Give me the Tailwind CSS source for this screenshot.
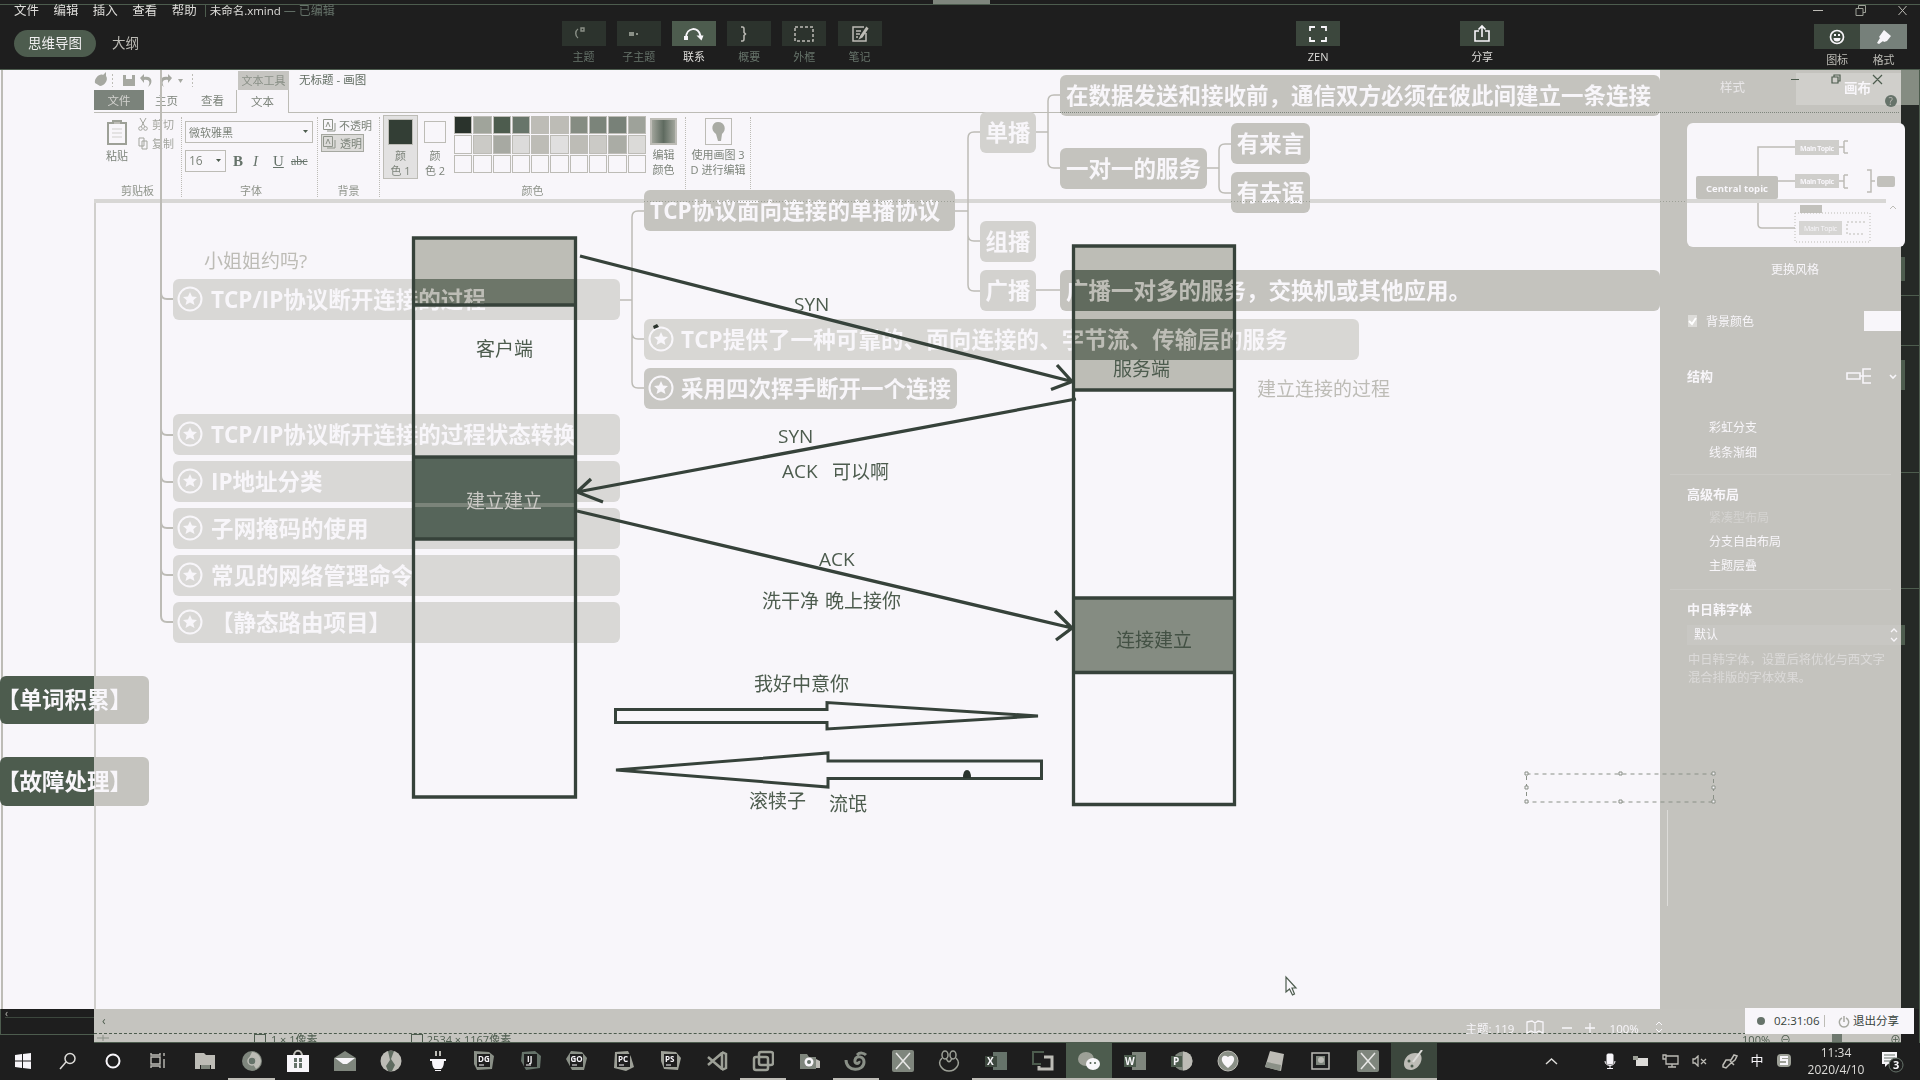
<!DOCTYPE html>
<html lang="zh">
<head>
<meta charset="utf-8">
<title>未命名.xmind</title>
<script src="https://cdn.jsdelivr.net/npm/@tailwindcss/browser@4"></script>
</head>
<body class="bg-[#1e1e1e]">
<div class="relative w-[1920px] h-[1080px] overflow-hidden flex flex-col bg-[#f8f6fa] font-['Open_Sans','Noto_Sans_CJK_SC',sans-serif] text-[12px] leading-none text-[#4d5c4e]">

  <!-- Mind map application header -->
  <header class="h-[70px] shrink-0 bg-[#1e1e1e] border-b border-[#4d5c4e] flex flex-col text-[#bdbcb6]">
    <div class="h-[5px] border-b border-[#4d5c4e] flex justify-center pl-[2px]"><span class="w-[57px] h-1 bg-[#7f867d]"></span></div>
    <div class="h-4 flex items-start pl-[14px] whitespace-nowrap">
      <nav class="flex gap-[14.4px] text-[12.5px] text-[#dddcd9]"><span>文件</span><span>编辑</span><span>插入</span><span>查看</span><span>帮助</span></nav>
      <span class="w-px h-3 bg-[#4d5c4e] ml-2 mr-1"></span>
      <span class="w-[74px] text-[11.500px] text-[#dddcd9]">未命名.xmind</span>
      <span class="text-[12px] text-[#66736a]">— 已编辑</span>
      <span class="ml-auto flex items-center pr-[12px] gap-[31px]">
        <svg width="11" height="11" stroke="#bdbcb6"><path d="M0 5.500h10"/></svg>
        <svg width="11" height="11" fill="none" stroke="#9da097"><path d="M1 3.500h7v7h-7zM3.500 3V.5h7v7H8"/></svg>
        <svg width="11" height="11" stroke="#bdbcb6"><path d="M1.500 1l8 9M9.500 1l-8 9"/></svg>
      </span>
    </div>
    <div class="flex items-start h-[48px] text-[11px] whitespace-nowrap">
      <span class="ml-[14px] mt-[9px] w-[82px] h-[27px] rounded-full bg-[#4d5c4e] text-[#f0eff0] text-[13.5px] flex items-center justify-center">思维导图</span>
      <span class="ml-4 mt-[16px] w-[444px] text-[13.5px]">大纲</span>
      <div class="flex text-[#66736a]">
        <div class="w-[55.2px] flex flex-col items-center gap-[5px]"><span class="w-11 h-[25px] bg-[#2c332d] flex items-center justify-center"><svg width="22" height="20" fill="none" stroke="#8a9087" stroke-width="1.400"><path d="M5 5C2 7 2 12 5 14M8 4h3v3H8z"/></svg></span>主题</div>
        <div class="w-[55.2px] flex flex-col items-center gap-[5px]"><span class="w-11 h-[25px] bg-[#2c332d] flex items-center justify-center"><svg width="22" height="20" fill="#8a9087"><path d="M1 8h5v4H1zM8 9h2v2H8z"/></svg></span>子主题</div>
        <div class="w-[55.2px] flex flex-col items-center gap-[5px] text-[#dddcd9]"><span class="w-11 h-[25px] bg-[#4d5c4e] flex items-center justify-center"><svg width="24" height="20" fill="none" stroke="#f8f6fa" stroke-width="2"><path d="M4 14C4 3 17 2 18.500 12"/><path d="M14.500 11.500h7l-2 5zM2 12h4v4H2z" fill="#f8f6fa" stroke="none"/></svg></span>联系</div>
        <div class="w-[55.2px] flex flex-col items-center gap-[5px]"><span class="w-11 h-[25px] bg-[#2c332d] flex items-center justify-center"><svg width="22" height="20" fill="none" stroke="#bdbcb6" stroke-width="1.500"><path d="M3 3h1.500q1.500 0 1.500 2v3.500l1.500 1.500-1.500 1.500V15q0 2-1.500 2H3"/></svg></span>概要</div>
        <div class="w-[55.2px] flex flex-col items-center gap-[5px]"><span class="w-11 h-[25px] bg-[#2c332d] flex items-center justify-center"><svg width="22" height="20" fill="none" stroke="#bdbcb6" stroke-width="1.500" stroke-dasharray="3 2"><path d="M2 3h18v14H2z"/></svg></span>外框</div>
        <div class="w-[55.2px] flex flex-col items-center gap-[5px]"><span class="w-11 h-[25px] bg-[#2c332d] flex items-center justify-center"><svg width="22" height="20" fill="none" stroke="#bdbcb6" stroke-width="1.500"><path d="M15 3H4v14h13V9M7 7h5M7 10h4M7 13h2M18 3l-6 9-1 2 2-1 6-9"/></svg></span>笔记</div>
      </div>
      <div class="ml-[409px] w-11 flex flex-col items-center gap-[5px] text-[#dddcd9]"><span class="w-11 h-[25px] bg-[#3c473d] flex items-center justify-center"><svg width="20" height="18" fill="none" stroke="#f8f6fa" stroke-width="1.800"><path d="M2 6V2h5M13 2h5v4M18 12v4h-5M7 16H2v-4"/></svg></span>ZEN</div>
      <div class="ml-[120px] w-11 flex flex-col items-center gap-[5px] text-[#dddcd9]"><span class="w-11 h-[25px] bg-[#3c473d] flex items-center justify-center"><svg width="18" height="20" fill="none" stroke="#f8f6fa" stroke-width="1.600"><path d="M6 7H2v10h14V7h-4M9 13V2.500M5.500 5.500L9 2l3.500 3.500"/></svg></span>分享</div>
      <div class="ml-[310px] mt-[3px] w-[46px] flex flex-col items-center gap-[5px]"><span class="w-full h-[25px] bg-[#3c473d] flex items-center justify-center"><svg width="18" height="18"><circle cx="9" cy="9" r="6.500" fill="none" stroke="#f8f6fa" stroke-width="1.700"/><path d="M5.500 10h7a3.500 3.500 0 0 1-7 0zM6 6h2v2H6zM10 6h2v2h-2z" fill="#f8f6fa"/></svg></span>图标</div>
      <div class="mt-[3px] w-[47px] flex flex-col items-center gap-[5px]"><span class="w-full h-[25px] bg-[#76807a] flex items-center justify-center"><svg width="18" height="18" fill="#f8f6fa"><path d="M9 2l7 6-4 5-3 1-5-5zM5 10l3 3-4 3-2-1z"/></svg></span>格式</div>
    </div>
  </header>

  <div class="flex h-[939px] shrink-0">
    <!-- Mind map edge visible to the left of the drawing window -->
    <div class="w-[94px] pl-px shrink-0"><div class="h-full border-l-2 border-[#bdbcb6]"></div></div>

    <!-- Drawing window -->
    <section class="w-[1566px] shrink-0 flex flex-col text-[#7d847b]">
      <div class="h-5 flex items-center whitespace-nowrap">
        <svg width="144" height="18" fill="#a6a8a1"><path d="M1 12C0 7 6 2 9 4l3-3v4c3 4-2 10-6 10z"/><path d="M29 4h12v11H29zm3 0v4h6V4z" fill-rule="evenodd"/><path d="M50 3v3c8-2 10 6 4 10 3-5 1-8-4-7v3l-4-5zM74 3v3c-8-2-10 6-4 10-3-5-1-8 4-7v3l4-5z"/><path d="M84 8h5l-2.500 4z"/><path d="M18.500 3v13M98.500 3v13" stroke="#bdbcb6" stroke-dasharray="2 2"/></svg>
        <span class="w-[51px] h-[19px] bg-[#c6c5c1] flex items-center justify-center text-[11px] text-[#8a9087]">文本工具</span>
        <span class="ml-[10px] text-[11.500px] text-[#5f6b60]">无标题 - 画图</span>
      </div>
      <div class="h-[23px] border-b border-[#bdbcb6] flex text-[11.500px]">
        <span class="w-[50px] h-5 bg-[#7b837b] text-[#d3d2cf] flex items-center justify-center pt-px">文件</span>
        <span class="w-[45px] h-[22px] flex items-center justify-center">主页</span>
        <span class="w-[47px] h-[22px] flex items-center justify-center">查看</span>
        <span class="w-[53px] h-[23px] border-x border-[#bdbcb6] bg-[#f8f6fa] flex items-center justify-center">文本</span>
      </div>
      <div class="h-[86px] pt-1 pb-[2px] flex text-[11px]">
        <div class="w-[88px] border-r border-dotted border-[#bdbcb6] flex flex-col">
          <div class="flex h-[68px] pl-3">
            <div class="w-[22px] flex flex-col items-center gap-1 pt-px whitespace-nowrap"><svg width="22" height="28" fill="#f8f6fa" stroke="#9da097" stroke-width="2"><path d="M2 5h18v21H2z"/><path d="M7 6V3h8v3" fill="#bdbcb6"/><path d="M6 11h10M6 15h10M6 19h10" stroke="#d0cfcc" stroke-width="1"/></svg>粘贴</div>
            <div class="ml-[10px] flex flex-col gap-[6px] pt-px text-[#a3a59e]">
              <span class="flex items-center gap-1 whitespace-nowrap"><svg width="10" height="13" fill="none" stroke="#a3a59e"><path d="M2 0l5 9M8 0L3 9"/><circle cx="2.500" cy="10.500" r="1.800"/><circle cx="7.500" cy="10.500" r="1.800"/></svg>剪切</span>
              <span class="flex items-center gap-1 whitespace-nowrap"><svg width="10" height="13" fill="none" stroke="#a3a59e"><path d="M1 1h5v8H1zM4 4h5v8H4z"/></svg>复制</span>
            </div>
          </div>
          <span class="text-center text-[#8f948b]">剪贴板</span>
        </div>
        <div class="w-[136px] border-r border-dotted border-[#bdbcb6] flex flex-col pl-[3px]">
          <div class="h-[68px] pt-1">
            <div class="w-[128px] h-[22px] border border-[#bdbcb6] flex items-center justify-between px-[3px]">微软雅黑<svg width="6" height="4" fill="#4d5c4e"><path d="M0 0h5L2.500 3z"/></svg></div>
            <div class="flex mt-[7px] items-center">
              <div class="w-[41px] h-[22px] border border-[#bdbcb6] flex items-center justify-between px-[3px] text-[12px]">16<svg width="6" height="4" fill="#4d5c4e"><path d="M0 0h5L2.500 3z"/></svg></div>
              <span class="flex items-center ml-[7px] font-['Liberation_Serif'] text-[15px] text-[#66736a]"><b class="w-[20px]">B</b><i class="w-[20px]">I</i><u class="w-[18px]">U</u><s class="text-[12px]">abc</s></span>
            </div>
          </div>
          <span class="text-center text-[#8f948b]">字体</span>
        </div>
        <div class="w-[62px] border-r border-dotted border-[#bdbcb6] flex flex-col">
          <div class="h-[68px] pl-[3px] flex flex-col whitespace-nowrap">
            <div class="h-[17px] pl-[2px] flex items-center gap-[2px]"><svg width="14" height="14" fill="none" stroke="#8f948b"><path d="M.5.5h9v10h-9zM3 8l2-5 2 5M12 4v8H4"/></svg>不透明</div>
            <div class="w-[43px] h-[18px] border border-[#a6a8a1] bg-[#dcdbd9] pl-px flex items-center gap-[2px]"><svg width="15" height="14" fill="none" stroke="#8f948b"><path d="M.5.5h9v10h-9zM3 8l2-5 2 5M12 4v8H4"/></svg>透明</div>
          </div>
          <span class="text-center text-[#8f948b]">背景</span>
        </div>
        <div class="w-[306px] border-r border-dotted border-[#bdbcb6] flex flex-col">
          <div class="h-[68px] pl-[3px] flex">
            <div class="w-[35px] h-[64px] -mt-[2px] border border-[#bdbcb6] bg-[#e2e1e1] flex flex-col items-center pt-[3px] leading-[15px]"><span class="w-[25px] h-[26px] mb-[3px] bg-[#333e35] border border-[#bdbcb6]"></span><span>颜</span><span>色 1</span></div>
            <div class="w-[28px] ml-[3px] flex flex-col items-center pt-1 leading-[15px]"><span class="w-[22px] h-[22px] mb-[5px] border border-[#bdbcb6]"></span><span>颜</span><span>色 2</span></div>
            <div class="w-[192px] h-[57px] ml-[5px] -mt-px grid grid-cols-10 gap-px [&>i]:border [&>i]:border-[#bdbcb6]">
              <i class="bg-[#2a332c]"></i><i class="bg-[#a0a49b]"></i><i class="bg-[#4d5c4e]"></i><i class="bg-[#68756a]"></i><i class="bg-[#bdbcb6]"></i><i class="bg-[#bdbcb6]"></i><i class="bg-[#858c82]"></i><i class="bg-[#7b847a]"></i><i class="bg-[#788178]"></i><i class="bg-[#9ea29a]"></i>
              <i></i><i class="bg-[#cbcac6]"></i><i class="bg-[#a7a9a2]"></i><i class="bg-[#dcdbda]"></i><i class="bg-[#bdbcb6]"></i><i class="bg-[#e0dfdf]"></i><i class="bg-[#bdbcb6]"></i><i class="bg-[#cbcac6]"></i><i class="bg-[#aaaca5]"></i><i class="bg-[#dbdad8]"></i>
              <i></i><i></i><i></i><i></i><i></i><i></i><i></i><i></i><i></i><i></i>
            </div>
            <div class="w-[27px] ml-1 flex flex-col items-center pt-[1px] leading-[15px] whitespace-nowrap"><span class="w-[27px] h-[27px] mb-[2px] border-2 border-[#bdbcb6] bg-linear-to-r from-[#a0a49b] via-[#5f6b60] to-[#a0a49b]"></span><span>编辑</span><span>颜色</span></div>
          </div>
          <span class="text-center text-[#8f948b]">颜色</span>
        </div>
        <div class="w-[65px] border-r border-dotted border-[#bdbcb6] flex flex-col items-center leading-[15px] whitespace-nowrap pt-[1px]"><span class="w-[27px] h-[27px] mb-[2px] border border-[#bdbcb6] flex items-center justify-center"><svg width="18" height="22" fill="#a9aba4"><path d="M9 1c7 0 9 8 4 12l-1 7H9l-2-7C1 9 3 1 9 1z"/></svg></span><span>使用画图 3</span><span>D 进行编辑</span></div>
      </div>
      <div class="h-1 bg-[#d8d7d5]"></div>
      <div class="flex-1 border-l-2 border-[#d0cfcc]"></div>
    </section>

    <!-- Format panel -->
    <aside class="w-[241px] shrink-0 bg-[#c4c3be] text-[#f8f6fa] flex flex-col whitespace-nowrap">
      <div class="h-[35px] flex text-[12.5px]"><span class="w-[136px] flex items-center pl-[60px] pt-[2px] opacity-70">样式</span><span class="flex-1 mt-[3px] bg-[#d0cfcb] flex items-center pl-12 text-[13.500px] font-bold">画布</span></div>
      <div class="w-[218px] h-[124px] ml-[27px] mt-[18px] rounded-md bg-[#f8f6fa] z-10">
        <svg width="218" height="124" fill="none" stroke="#bdbcb6" stroke-width="1.500"><path d="M71 53V24h37M91 58h17M71 76v25q0 4 4 4h33M152 24h5M157 18v12M157 18h4M157 30h4M152 58h5M157 52v13M157 52h4M157 65h4"/><path d="M180 47h4v22h-4M184 58h4"/><g fill="#c2c1bc" stroke="none"><rect x="9" y="53" width="82" height="23" rx="2"/><rect x="108" y="17" width="44" height="15" fill="#cfcecb"/><rect x="108" y="51" width="44" height="14" fill="#cfcecb"/><rect x="190" y="53" width="18" height="11" rx="2"/><rect x="113" y="82" width="22" height="8"/><rect x="112" y="98" width="43" height="14" fill="#d6d5d3"/></g><path d="M108 90h75v29h-75z" stroke-width="1" stroke-dasharray="1 2"/><path d="M178 99h-18v12h18" stroke-width="1" stroke-dasharray="2 2"/><path d="M0 78h199" stroke="#d8d7d5" stroke-width="4"/><path d="M203 86l3-3 3 3" stroke-width="1"/><g fill="#f8f6fa" stroke="none"><text x="19" y="68.500" font-size="9.500" font-weight="700" textLength="62">Central topic</text><text x="113" y="27.500" font-size="7" font-weight="700" textLength="34">Main Topic</text><text x="113" y="61" font-size="7" font-weight="700" textLength="34">Main Topic</text><text x="117" y="108" font-size="7" textLength="33">Main Topic</text></g></svg>
      </div>
      <span class="mt-[17px] text-center pl-[29px]">更换风格</span>
      <div class="mt-[35px] flex items-center pl-7 h-5 z-10"><span class="w-3 h-3 bg-[#dddcd9] flex items-center justify-center"><svg width="9" height="9" fill="none" stroke="#fff" stroke-width="2"><path d="M1 4l3 3 4-6"/></svg></span><span class="ml-[9px] w-[48px] pt-px shrink-0">背景颜色</span><span class="ml-[110px] w-[37px] h-5 shrink-0 bg-[#f8f6fa]"></span></div>
      <div class="mt-[35px] h-5 flex items-center pl-[27px] text-[13px] font-bold">结构<svg class="ml-auto mr-[3px]" width="52" height="18" fill="none" stroke="#f8f6fa" stroke-width="1.600"><path d="M1 6h13v6H1zM14 9h11M25 2h-8v14h8M44 8l3 3 3-3"/></svg></div>
      <div class="mt-[36px] pl-[49px] flex flex-col gap-[13px]"><span>彩虹分支</span><span>线条渐细</span></div>
      <div class="mt-[15px] mx-[10px] h-px bg-[#cbcac6]"></div>
      <span class="mt-[13px] pl-[27px] text-[13px] font-bold">高级布局</span>
      <div class="mt-[11px] pl-[49px] flex flex-col gap-3"><span class="opacity-30">紧凑型布局</span><span>分支自由布局</span><span>主题层叠</span></div>
      <div class="mt-[17px] mx-[10px] h-px bg-[#cbcac6]"></div>
      <span class="mt-[13px] pl-[27px] text-[13px] font-bold">中日韩字体</span>
      <div class="mt-[9px] ml-[27px] h-5 bg-[#c8c7c3] flex items-center pl-[7px]">默认<svg class="ml-auto mr-[3px]" width="8" height="14" fill="none" stroke="#f8f6fa" stroke-width="1.300"><path d="M1 4l3-3 3 3M1 10l3 3 3-3"/></svg></div>
      <p class="mt-[6px] pl-[28px] leading-[18px] text-[12.300px] opacity-45">中日韩字体，设置后将优化与西文字<br>混合排版的字体效果。</p>
    </aside>

    <!-- Edge of the window behind -->
    <div class="flex-1 bg-[#252926] border-r border-[#4d5c4e] flex flex-col">
      <span class="h-[35px] bg-[#858c82]"></span><span class="mt-[152px] h-6 w-1 bg-[#4d5c4e]"></span><span class="mt-[14px] h-px bg-[#4d5c4e]"></span><span class="mt-[49px] h-px bg-[#4d5c4e]"></span><span class="mt-[14px] h-[30px] w-1 bg-[#4d5c4e]"></span><span class="mt-[82px] h-px bg-[#4d5c4e]"></span><span class="mt-[115px] h-px bg-[#4d5c4e]"></span><span class="mt-9 h-5 w-1 bg-[#4d5c4e]"></span>
    </div>
  </div>

  <!-- Status strips -->
  <div class="h-[34px] shrink-0 flex">
    <div class="w-[94px] bg-[#1e1e1e]"><div class="h-[26px] border-l border-b border-[#4d5c4e] text-[#bdbcb6] text-[10px] pl-1"><div class="h-[9px] border-b border-[#3c473d] leading-[8px]">‹</div></div></div>
    <div class="w-[1807px] bg-[#c5c4bf] border-b border-[#4d5c4e]">
      <div class="h-[25px] border-b border-dashed border-[#4d5c4e] flex items-end text-[#f8f6fa] whitespace-nowrap"><span class="pl-2 self-center text-[#4d5c4e]">‹</span><span class="ml-[1360px] w-[60px] text-[11.500px] leading-[8px]">主题: 119</span><svg width="130" height="16" class="-mr-[46px] -mb-[2px]" fill="none" stroke="#f8f6fa" stroke-width="1.300"><path d="M1 3l5-1 3 2 3-2 5 1v11l-4-2-4 2-4-2-4 2zM9 4v9M36 9h10M59 9h10M64 4v10"/></svg><span class="w-[45px] leading-[8px] text-[11.500px]">100%</span><svg width="9" height="14" class="-mb-px" fill="none" stroke="#f8f6fa"><path d="M1 5l3-3 3 3M1 9l3 3 3-3"/></svg></div>
      <div class="h-2 overflow-hidden flex items-start text-[11px] leading-[11px] whitespace-nowrap"><svg width="160" height="8"><path d="M3 4h12M9 1v6" stroke="#8a9087"/></svg><span class="w-3 h-3 border border-[#4d5c4e] mr-[5px]"></span><span class="w-[140px]">1 × 1像素</span><span class="w-3 h-3 border border-[#4d5c4e] mr-[4px]"></span><span class="w-[1316px]">2534 × 1167像素</span><span class="w-[38px]">100%</span><span class="w-4">⊖</span><span class="w-[10px] h-2 ml-9 bg-[#6f7970]"></span><span class="ml-12">⊕</span></div>
    </div>
    <div class="flex-1 bg-[#1e1e1e] border-r border-[#4d5c4e]"></div>
  </div>

  <!-- Taskbar -->
  <footer class="h-[37px] shrink-0 bg-[#1e1e1e] flex text-[#f8f6fa] [&>span]:h-full [&>span]:shrink-0 [&>span]:flex [&>span]:items-center [&>span]:justify-center [&>span]:border-b-2 [&>span]:border-transparent">
    <span class="w-[45px]"><svg width="16" height="16" fill="#f8f6fa"><path d="M0 2l7-1v6.500H0zM8 1l8-1v7.500H8zM0 8.500h7V15l-7-1zM8 8.500h8V16l-8-1z"/></svg></span>
    <span class="w-[45px]"><svg width="18" height="18" fill="none" stroke="#dddcd9" stroke-width="1.500"><circle cx="11" cy="6.500" r="5"/><path d="M7 10l-6 7"/></svg></span>
    <span class="w-[45px]"><svg width="18" height="18" fill="none" stroke="#f8f6fa" stroke-width="2"><circle cx="9" cy="9" r="6.500"/></svg></span>
    <span class="w-[46px]"><svg width="18" height="18" fill="none" stroke="#bdbcb6" stroke-width="1.400"><path d="M2 5h9v7H2zM2 1v2h9V1M2 16v-2h9v2M15 1v3M15 7v9"/></svg></span>
    <span class="w-[47px]"><svg width="20" height="18" fill="#bdbcb6"><path d="M0 1h9l2 2h9v14h-4v-4H5v4H0z"/><path d="M6 13h9v4H6z" fill="#7f867d"/></svg></span>
    <span class="w-[47px] border-[#bdbcb6]!"><svg width="20" height="20"><circle cx="10" cy="10" r="10" fill="#7f867d"/><path d="M10 1a9 9 0 0 1 4 17l-3-5 3-6H7z" fill="#bdbcb6"/><circle cx="10" cy="10" r="4" fill="#66736a" stroke="#bdbcb6" stroke-width="1.500"/></svg></span>
    <span class="w-[46px]"><svg width="22" height="23"><path d="M7 7c0-7 8-7 8 0" fill="none" stroke="#bdbcb6" stroke-width="2"/><path d="M0 6h22v17H0z" fill="#f8f6fa"/><path d="M7 9h3v4H7zM12 9h3v4h-3zM7 14h3v5H7zM12 14h3v5h-3z" fill="#66736a"/></svg></span>
    <span class="w-[47px]"><svg width="22" height="20"><path d="M0 7l11-7 11 7v13H0z" fill="#7f867d"/><path d="M1 7h20l-8 6h-4z" fill="#f8f6fa"/></svg></span>
    <span class="w-[46px]"><svg width="22" height="22"><circle cx="11" cy="11" r="10.500" fill="#bdbcb6"/><path d="M8 1h6l-3 8 4 6-3 6H8l-2-5 4-6z" fill="#5f6b60"/></svg></span>
    <span class="w-[47px]"><svg width="18" height="20"><path d="M3 10h12c0 7-3 8-3 8H6s-3-1-3-8zM1 8h16v2H1zM6 19h6v1H6z" fill="#f8f6fa"/><path d="M7 0v5M11 0v5" stroke="#bdbcb6" stroke-width="2"/></svg></span>
    <span class="w-[46px]"><svg width="22" height="21"><path d="M1 1l15 1 5 4-2 13-15 1-3-6z" fill="#8a9087"/><path d="M4 4h13v13H4z" fill="#1e1e1e"/><text x="5" y="11.500" font-size="8" font-weight="700" fill="#f8f6fa">DG</text><path d="M6 15h5" stroke="#f8f6fa"/></svg></span>
    <span class="w-[47px]"><svg width="22" height="21"><path d="M2 2l13-1 6 5-1 12-14 2-5-9z" fill="#66736a"/><path d="M4 4h13v13H4z" fill="#1e1e1e"/><text x="7" y="11.500" font-size="8" font-weight="700" fill="#f8f6fa">IJ</text><path d="M6 15h5" stroke="#f8f6fa"/></svg></span>
    <span class="w-[46px]"><svg width="22" height="21"><path d="M5 1l11 1 5 6-3 12H6L0 9z" fill="#8a9087"/><path d="M4 4h13v13H4z" fill="#1e1e1e"/><text x="4.500" y="11.500" font-size="8" font-weight="700" fill="#f8f6fa">GO</text><path d="M6 15h5" stroke="#f8f6fa"/></svg></span>
    <span class="w-[47px]"><svg width="22" height="21"><path d="M2 2l13-1 3 6 3 10-8 4-12-3z" fill="#9da097"/><path d="M4 4h13v13H4z" fill="#1e1e1e"/><text x="5" y="11.500" font-size="8" font-weight="700" fill="#f8f6fa">PC</text><path d="M6 15h5" stroke="#f8f6fa"/></svg></span>
    <span class="w-[47px]"><svg width="22" height="21"><path d="M1 1l15 1 5 6-3 12-14-1-3-8z" fill="#9da097"/><path d="M4 4h13v13H4z" fill="#1e1e1e"/><text x="5" y="11.500" font-size="8" font-weight="700" fill="#f8f6fa">PS</text><path d="M6 15h5" stroke="#f8f6fa"/></svg></span>
    <span class="w-[46px]"><svg width="22" height="22" fill="none" stroke="#9da097" stroke-width="2.500"><path d="M16 2v18M16 3L2 15M16 19L2 7M16 2l4 2v14l-4 2"/></svg></span>
    <span class="w-[46px] border-[#bdbcb6]!"><svg width="22" height="22" fill="none" stroke="#9da097" stroke-width="2.500"><rect x="7" y="2" width="14" height="13" rx="2"/><rect x="2" y="7" width="14" height="13" rx="2"/></svg></span>
    <span class="w-[47px]"><svg width="22" height="18"><path d="M1 2h7l2 3h7v12H1z" fill="#7f867d"/><path d="M17 7l4 2v7h-4z" fill="#bdbcb6"/><circle cx="10" cy="10" r="4.500" fill="#f8f6fa"/><circle cx="10" cy="10" r="2" fill="#66736a"/></svg></span>
    <span class="w-[46px] border-[#bdbcb6]!"><svg width="24" height="20" fill="none" stroke="#8a9087" stroke-width="3"><path d="M2 9c0 12 18 12 18 2 0-6-8-7-9-2s5 4 4 1M13 4c3-3 7-2 9 0"/></svg></span>
    <span class="w-[47px]"><svg width="22" height="22"><rect width="22" height="22" rx="2" fill="#7f867d"/><path d="M4 3l7 8 7-8M4 19l7-8 7 8" fill="none" stroke="#e8e7e6" stroke-width="1.500"/></svg></span>
    <span class="w-[46px]"><svg width="22" height="22" fill="none" stroke="#9da097" stroke-width="1.500"><ellipse cx="7" cy="5" rx="3" ry="4"/><ellipse cx="15" cy="5" rx="3" ry="4"/><path d="M4 8c-6 6 1 13 7 13s13-7 7-13M8 8c2 5 4 5 6 0"/></svg></span>
    <span class="w-[47px] border-[#bdbcb6]!"><svg width="22" height="20"><path d="M8 1h14v18H8z" fill="#66736a"/><path d="M0 5h12v11H0z" fill="#3c473d"/><text x="2" y="14" font-size="10" font-weight="700" fill="#f8f6fa">X</text></svg></span>
    <span class="w-[47px] border-[#bdbcb6]!"><svg width="22" height="20" fill="none"><path d="M12 1H1v12h8" stroke="#4d5c4e" stroke-width="2"/><path d="M12 6h8v12H7v-3" stroke="#bdbcb6" stroke-width="3"/></svg></span>
    <span class="w-[46px] bg-[#4d5c4e] border-[#bdbcb6]!"><svg width="24" height="20"><ellipse cx="9" cy="8" rx="8" ry="7" fill="#9da097"/><ellipse cx="16" cy="13" rx="7" ry="6" fill="#f8f6fa"/><circle cx="13.500" cy="12" r="1" fill="#4d5c4e"/><circle cx="18" cy="12" r="1" fill="#4d5c4e"/></svg></span>
    <span class="w-[46px] border-[#bdbcb6]!"><svg width="22" height="20"><path d="M8 1h14v18H8z" fill="#7f867d"/><path d="M0 4h12v12H0z" fill="#4d5c4e"/><text x="1" y="14" font-size="10" font-weight="700" fill="#f8f6fa">W</text></svg></span>
    <span class="w-[47px] border-[#bdbcb6]!"><svg width="22" height="20"><circle cx="12" cy="10" r="9.500" fill="#7f867d"/><path d="M12 .5a9.500 9.500 0 0 1 0 19z" fill="#bdbcb6"/><path d="M0 5h11v11H0z" fill="#4d5c4e"/><text x="2" y="14" font-size="10" font-weight="700" fill="#f8f6fa">P</text></svg></span>
    <span class="w-[46px] border-[#bdbcb6]!"><svg width="22" height="22"><circle cx="11" cy="11" r="10" fill="#8a9087" stroke="#bdbcb6"/><path d="M11 18C0 10 6 3 11 7c5-4 11 3 0 11z" fill="#f8f6fa"/></svg></span>
    <span class="w-[47px] border-[#bdbcb6]!"><svg width="22" height="22"><path d="M6 1l14 3-3 17-16-4z" fill="#bdbcb6"/><path d="M3 12l14 3-1 6-15-4z" fill="#8a9087"/></svg></span>
    <span class="w-[46px] border-[#bdbcb6]!"><svg width="20" height="18"><path d="M1 1h17v16H1z" fill="#1e1e1e" stroke="#bdbcb6" stroke-width="1.500"/><path d="M5 4h9v9H5z" fill="#7f867d"/><circle cx="10" cy="8" r="3" fill="#bdbcb6"/></svg></span>
    <span class="w-[47px] border-[#bdbcb6]!"><svg width="22" height="22"><rect width="22" height="22" rx="2" fill="#7f867d"/><path d="M4 3l7 8 7-8M4 19l7-8 7 8" fill="none" stroke="#e8e7e6" stroke-width="1.500"/></svg></span>
    <span class="w-[46px] bg-[#3c473d] border-[#bdbcb6]!"><svg width="24" height="22"><path d="M2 14C2 6 10 1 18 4c4 4 0 15-9 16-5 0-7-3-7-6z" fill="#bdbcb6"/><path d="M20 0l-9 12" stroke="#dddcd9" stroke-width="2"/><circle cx="7" cy="11" r="1.500" fill="#4d5c4e"/><circle cx="10" cy="16" r="1.500" fill="#4d5c4e"/></svg></span>
    <span class="ml-[99px] w-[31px]"><svg width="13" height="8" fill="none" stroke="#dddcd9" stroke-width="1.400"><path d="M1 7l5.500-5L12 7"/></svg></span>
    <span class="ml-[28px] w-[30px]"><svg width="12" height="16" fill="none" stroke="#f8f6fa"><rect x="3" y="1" width="6" height="10" rx="1" fill="#f8f6fa"/><path d="M1 8c0 6 10 6 10 0M6 12v3M3 15.500h6"/></svg></span>
    <span class="w-[31px]"><svg width="16" height="12"><path d="M3 3h12v8H3z" fill="#dddcd9"/><path d="M0 1h5v4H0z" fill="#9da097"/></svg></span>
    <span class="w-[29px]"><svg width="17" height="14" fill="none" stroke="#bdbcb6" stroke-width="1.300"><path d="M4 2h12v8H4zM1 1h3v4H1zM10 10v3M6 13h8"/></svg></span>
    <span class="w-[30px]"><svg width="16" height="12" fill="none" stroke="#bdbcb6" stroke-width="1.300"><path d="M1 4h2l3-3v10L3 8H1zM9 4l5 5M14 4L9 9"/></svg></span>
    <span class="w-[30px]"><svg width="16" height="16" fill="none" stroke="#bdbcb6" stroke-width="1.500"><path d="M1 12l3-5h5l3-5 3 1-2 4-5 4-4 4-3-1zM8 8l4 4"/></svg></span>
    <span class="w-[24px] text-[13px]">中</span>
    <span class="w-[30px]"><svg width="16" height="15"><rect x="1" y="1" width="14" height="13" rx="4" fill="#9da097"/><path d="M12 4H5v3h6v4H4" fill="none" stroke="#f8f6fa" stroke-width="2"/></svg></span>
    <span class="w-[74px] flex-col text-[12px] leading-[17px] text-[#dddcd9]"><b class="font-normal">11:34</b><b class="font-normal">2020/4/10</b></span>
    <span class="w-[36px]"><svg width="26" height="24"><path d="M4 3h15v12H10l-3 3v-3H4z" fill="#f8f6fa"/><path d="M6 6h11M6 9h11M6 12h7" stroke="#66736a"/><circle cx="18" cy="16" r="7" fill="#1e1e1e" stroke="#66736a"/><text x="15" y="20" font-size="11" font-weight="700" fill="#f8f6fa">3</text></svg></span>
  </footer>

  <!-- Free canvas: mind map nodes and drawing share page coordinates -->
  <div class="absolute inset-0 pointer-events-none whitespace-nowrap">
    <svg class="absolute inset-0" width="1920" height="1080" fill="none" stroke="#bdbcb6" stroke-width="2">
      <path d="M161 70v546q0 6 6 6h6M161 293q0 6 6 6h6M161 429q0 6 6 6h6M161 476q0 6 6 6h6M161 522q0 6 6 6h6M161 569q0 6 6 6h6"/>
      <path stroke-width="1.500" d="M620 300h12M644 211h-6q-6 0-6 6v165q0 6 6 6h6M632 333q0 6 6 6h6M955 211h13M980 132h-6q-6 0-6 6v147q0 6 6 6h6M968 235q0 6 6 6h6M1036 290h24M1036 132h12M1060 95h-6q-6 0-6 6v61q0 6 6 6h6M1207 168h12M1231 144h-6q-6 0-6 6v37q0 6 6 6h6"/>
    </svg>

    <!-- topics -->
    <div class="absolute inset-0 text-[#f8f6fa] font-bold text-[22.500px] [&>div]:absolute [&>div]:flex [&>div]:items-center [&>div]:rounded-md [&>div]:h-[41px] [&>div]:pt-px">
      <div class="left-[173px] top-[279px] w-[447px] bg-[#d9d8d6]"><i class="absolute left-[240px] top-0 w-[162px] h-[26px] bg-[#8f9a90]"></i><span class="relative pl-[38px]">TCP/IP协议断开连接的过程</span></div>
      <div class="left-[173px] top-[414px] w-[447px] bg-[#d9d8d6]"><span class="pl-[38px]">TCP/IP协议断开连接的过程状态转换</span></div>
      <div class="left-[173px] top-[461px] w-[447px] bg-[#d9d8d6]"><span class="pl-[38px]">IP地址分类</span></div>
      <div class="left-[173px] top-[508px] w-[447px] bg-[#d9d8d6]"><span class="pl-[38px]">子网掩码的使用</span></div>
      <div class="left-[173px] top-[555px] w-[447px] bg-[#d9d8d6]"><span class="pl-[38px]">常见的网络管理命令</span></div>
      <div class="left-[173px] top-[602px] w-[447px] bg-[#d9d8d6]"><span class="pl-[38px]">【静态路由项目】</span></div>
      <div class="left-[644px] top-[190px] w-[311px] bg-[#c5c4bf]"><span class="pl-[6px] tracking-[0.1px]">TCP协议面向连接的单播协议</span></div>
      <div class="left-[644px] top-[319px] w-[715px] bg-[#d8d7d4]"><i class="absolute left-[429px] top-0 w-[163px] h-[41px] bg-[#8f9a90]"></i><span class="relative pl-[37px] tracking-[0.1px]">TCP提供了一种可靠的、面向连接的、字节流、传输层的服务</span></div>
      <div class="left-[644px] top-[368px] w-[313px] bg-[#c8c7c3]"><span class="pl-[37px]">采用四次挥手断开一个连接</span></div>
      <div class="left-[980px] top-[112px] w-[56px] justify-center bg-[#d3d2cf]">单播</div>
      <div class="left-[980px] top-[221px] w-[56px] justify-center bg-[#d3d2cf]">组播</div>
      <div class="left-[980px] top-[270px] w-[56px] justify-center bg-[#d3d2cf]">广播</div>
      <div class="left-[1060px] top-[75px] w-[600px] rounded-r-none bg-[#c4c3be]"><span class="pl-[6px]">在数据发送和接收前，通信双方必须在彼此间建立一条连接</span></div>
      <div class="left-[1060px] top-[148px] w-[147px] justify-center bg-[#c4c3be]">一对一的服务</div>
      <div class="left-[1231px] top-[123px] w-[79px] justify-center bg-[#c4c3be]">有来言</div>
      <div class="left-[1231px] top-[172px] w-[79px] justify-center bg-[#c4c3be]">有去语</div>
      <div class="left-[1060px] top-[270px] w-[600px] rounded-r-none bg-[#c4c3be]"><i class="absolute left-[13px] top-0 w-[163px] h-[41px] bg-[#7f8b81]"></i><span class="relative pl-[6px]">广播一对多的服务，交换机或其他应用。</span></div>
      <div class="left-0 top-[676px] w-[149px] h-[48px]! bg-linear-to-r from-[#4d5c4e] from-[94px] to-[#c5c4bf] to-[94px]"><span class="-ml-[3px]">【单词积累】</span></div>
      <div class="left-0 top-[757px] w-[149px] h-[49px]! bg-linear-to-r from-[#4d5c4e] from-[94px] to-[#c5c4bf] to-[94px]"><span class="-ml-[3px]">【故障处理】</span></div>
    </div>

    <svg class="absolute inset-0" width="1920" height="1080">
      <defs><g id="star"><circle r="11.500" fill="none" stroke="#f8f6fa" stroke-width="2"/><path d="M0-7l2 4.500 5 .5-3.700 3.200L4.500 6 0 3.500-4.500 6l1.200-4.800L-7-2l5-.5z" fill="#f8f6fa"/></g></defs>
      <use href="#star" x="190" y="299"/><use href="#star" x="190" y="434"/><use href="#star" x="190" y="481"/><use href="#star" x="190" y="528"/><use href="#star" x="190" y="575"/><use href="#star" x="190" y="622"/><use href="#star" x="661" y="339"/><use href="#star" x="661" y="388"/>
      <path d="M1060 112.500h840" stroke="#7f867d" stroke-dasharray="1 1"/><path d="M644 201.500h311M1231 201.500h79M1660 201.500h27" stroke="#9da097" stroke-dasharray="1 2"/>
      <g fill="#c3c4ba" class="mix-blend-multiply"><path d="M414 238h162v67H414zM1074 246h162v144h-162z"/></g>
      <path d="M414 457h162v82H414z" fill="#56655a"/><path d="M414 503h162v4H414z" fill="#7b847a"/><path d="M1074 597h162v75h-162z" fill="#858c82"/>
      <g fill="none" stroke="#36423a" stroke-width="3.300">
        <path d="M413.500 238h162v559h-162zM413 305h163M413 457h163M413 539h163M1073.500 246h161v558.500h-161zM1073 390h162M1073 598h162M1073 672.500h162"/>
        <path d="M580 256l492 125.500M1057 365l15 16.500-21 8M1076 399L577 492M591 479l-14 13 26 10M577 511l495 117M1055 611l17 17-16 12"/>
        <path stroke-width="3" d="M615.500 709.500H827V702.500l211 13.500-211 13v-6.500H615.500zM616 770l212-17v8h213.500v17.500H828V787z"/>
      </g>
      <path d="M963 778q0-8 4-8t4 8zM653 326l4-2 2 3-5 2z" fill="#2a332c"/>
      <!-- text selection frame -->
      <path d="M1526.500 774h187v28h-187z" fill="none" stroke="#8a9087" stroke-dasharray="4 4"/><g fill="#f8f6fa" stroke="#8a9087"><path d="M1525 772h3v3h-3zM1619 772h3v3h-3zM1712 772h3v3h-3zM1525 786h3v3h-3zM1712 786h3v3h-3zM1525 800h3v3h-3zM1619 800h3v3h-3zM1712 800h3v3h-3z"/></g>
      <path d="M1667.500 810v96" stroke="#dddcd9"/>
      <path d="M1286 977v15l3.500-3 3 6 2-1-2.500-6h4z" fill="#f8f6fa" stroke="#4d5c4e" stroke-width="1.200"/>
      <!-- drawing window buttons -->
      <g fill="none" stroke="#4d5c4e" stroke-width="1.200"><path d="M1791 79.500h8M1873 75l9 9M1882 75l-9 9M1832 77h6v6h-6zM1834 77v-2h6v6h-2"/></g><circle cx="1891" cy="101" r="6" fill="#66736a"/><text x="1888.500" y="105" font-size="10" fill="#bdbcb6">?</text>
    </svg>

    <!-- captions of the handshake drawing -->
    <div class="absolute inset-0 text-[19px] leading-[20px] text-[#4d5c4e] [&>span]:absolute">
      <span class="left-[204px] top-[251px] text-[#bdbcb6]">小姐姐约吗?</span>
      <span class="left-[476px] top-[339px]">客户端</span>
      <span class="left-[466px] top-[491px] text-[#c9c8c4]">建立建立</span>
      <span class="left-[1113px] top-[359px]">服务端</span>
      <span class="left-[1116px] top-[630px] text-[#435144]">连接建立</span>
      <span class="left-[1257px] top-[379px] text-[#bdbcb6]">建立连接的过程</span>
      <span class="left-[794px] top-[294px]">SYN</span>
      <span class="left-[778px] top-[426px]">SYN</span>
      <span class="left-[782px] top-[461px]">ACK</span><span class="left-[832px] top-[462px]">可以啊</span>
      <span class="left-[819px] top-[549px]">ACK</span>
      <span class="left-[762px] top-[591px]">洗干净</span><span class="left-[825px] top-[591px]">晚上接你</span>
      <span class="left-[754px] top-[674px]">我好中意你</span>
      <span class="left-[749px] top-[791px]">滚犊子</span><span class="left-[829px] top-[794px]">流氓</span>
    </div>

    <!-- screen sharing timer -->
    <div class="absolute left-[1745px] top-[1008px] w-[169px] h-[26px] bg-[#f8f6fa] flex items-center pl-3 text-[11.500px] text-[#36423a]"><span class="size-2 rounded-full bg-[#66736a]"></span><span class="ml-[9px] w-[50px]">02:31:06</span><span class="w-px h-3 bg-[#bdbcb6]"></span><svg class="ml-[13px] mr-[3px]" width="12" height="13" fill="none" stroke="#a6a8a1" stroke-width="1.500"><path d="M4 3a4.700 4.700 0 1 0 4 0M6 1v6"/></svg>退出分享</div>
  </div>
</div>
</body>
</html>
